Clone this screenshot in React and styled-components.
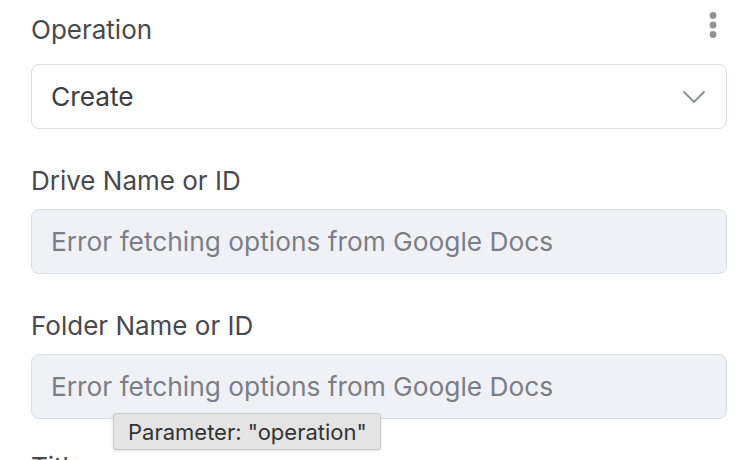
import React from 'react';
import styled, { createGlobalStyle } from 'styled-components';

const GlobalStyle = createGlobalStyle`
  html, body {
    margin: 0;
    padding: 0;
    background: #ffffff;
    overflow: hidden;
  }
  body {
    font-family: Inter, "Noto Sans", sans-serif;
  }
`;

const fields = [
  { label: 'Drive Name or ID', placeholder: 'Error fetching options from Google Docs' },
  { label: 'Folder Name or ID', placeholder: 'Error fetching options from Google Docs' },
];

const Panel = styled.div`
  width: 740px;
  height: 460px;
  overflow: hidden;
  box-sizing: border-box;
  padding: 10px 13px 0 31px;
  position: relative;
`;

const Field = styled.div`
  display: flex;
  flex-direction: column;
  margin-bottom: 32px;
  margin-top: ${({ $pulled }) => ($pulled ? '-4px' : '0')};
`;

const LabelRow = styled.div`
  display: flex;
  align-items: center;
  justify-content: space-between;
  height: 40px;
  margin-bottom: ${({ $first }) => ($first ? '14px' : '8px')};
`;

const Label = styled.label`
  font-size: 26px;
  line-height: 40px;
  color: #48494d;
  font-weight: 400;
`;

const Box = styled.div`
  box-sizing: border-box;
  height: 65px;
  display: flex;
  align-items: center;
  justify-content: space-between;
  padding: 0 20px 0 19px;
  border: 1.5px solid #dadde8;
  border-radius: 8px;
  background: ${({ $disabled }) => ($disabled ? '#f0f1f6' : '#ffffff')};
  font-size: 26.3px;
  color: ${({ $disabled }) => ($disabled ? '#7b7e86' : '#3d3e42')};
`;

const Dots = styled.svg`
  width: 10px;
  height: 28px;
  margin-right: 9px;
  margin-top: -10px;
`;

const Chevron = styled.svg`
  width: 24px;
  height: 14px;
`;

const Tooltip = styled.div`
  position: absolute;
  left: 113px;
  top: 413px;
  padding: 0 13px 0 14px;
  height: 37px;
  display: flex;
  align-items: center;
  white-space: nowrap;
  box-sizing: border-box;
  background: #e4e4e4;
  border: 1px solid #cbcbcb;
  border-radius: 3px;
  box-shadow: 0 1px 3px rgba(0, 0, 0, 0.12);
  font-size: 22px;
  color: #333333;
`;

export default function App() {
  return (
    <>
      <GlobalStyle />
      <Panel>
        <Field>
          <LabelRow $first>
            <Label>Operation</Label>
            <Dots viewBox="0 0 10 28">
              <circle cx="5" cy="4.5" r="3.4" fill="#909298" />
              <circle cx="5" cy="14" r="3.4" fill="#909298" />
              <circle cx="5" cy="23.5" r="3.4" fill="#909298" />
            </Dots>
          </LabelRow>
          <Box>
            <span>Create</span>
            <Chevron viewBox="0 0 24 14">
              <path d="M1.5 1.5 L12 12 L22.5 1.5" fill="none" stroke="#8a8c93" strokeWidth="1.8" />
            </Chevron>
          </Box>
        </Field>
        {fields.map((f) => (
          <Field key={f.label}>
            <LabelRow>
              <Label>{f.label}</Label>
            </LabelRow>
            <Box $disabled>{f.placeholder}</Box>
          </Field>
        ))}
        <Field $pulled>
          <LabelRow>
            <Label>Title</Label>
          </LabelRow>
        </Field>
        <Tooltip>Parameter: "operation"</Tooltip>
      </Panel>
    </>
  );
}
